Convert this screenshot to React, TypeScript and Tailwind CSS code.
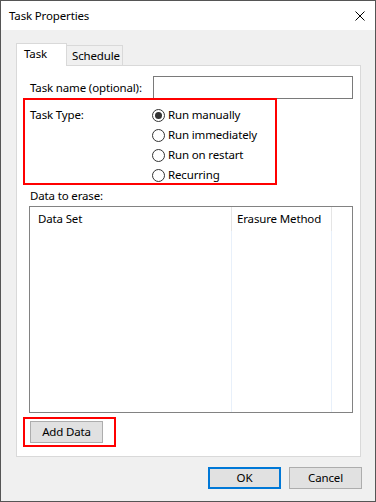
import React from "react";

const font = { fontFamily: '"Noto Sans", "Segoe UI", sans-serif' };

function Radio({ label, checked }: { label: string; checked?: boolean }) {
  return (
    <div className="flex h-[20px] items-center gap-[3px]">
      <span className="flex h-[13px] w-[13px] items-center justify-center rounded-full border border-[#333333] bg-white">
        {checked && <span className="h-[7px] w-[7px] rounded-full bg-[#333333]" />}
      </span>
      <span className="leading-[20px]">{label}</span>
    </div>
  );
}

export default function App() {
  return (
    <div
      className="relative flex h-[502px] w-[376px] flex-col border border-[#555555] bg-[#f0f0f0] text-[11.5px] tracking-[-0.15px] text-black"
      style={font}
    >
      {/* Title bar */}
      <div className="flex h-[29px] shrink-0 items-center justify-between bg-white pl-[8px] pr-[10px]">
        <span className="leading-[16px]">Task Properties</span>
        <svg width="10" height="10" viewBox="0 0 10 10" className="block">
          <path d="M0.5 0.5 L9.5 9.5 M9.5 0.5 L0.5 9.5" stroke="#000" strokeWidth="1" fill="none" />
        </svg>
      </div>

      {/* Body */}
      <div className="flex flex-1 flex-col pl-[15px] pt-[13px]">
        {/* Tabs */}
        <div className="flex h-[22px] items-end">
          <div className="relative z-10 mb-[-1px] flex h-[23px] w-[51px] items-start border-l border-r border-t border-[#d9d9d9] bg-white pl-[7px] pt-[2px]">
            <span className="leading-[16px]">Task</span>
          </div>
          <div className="flex h-[20px] w-[56px] items-start border-r border-t border-[#d9d9d9] bg-[#f0f0f0] pl-[5px] pt-[2px]">
            <span className="leading-[16px]">Schedule</span>
          </div>
        </div>

        {/* Panel */}
        <div className="flex h-[392px] w-[345px] flex-col border border-[#d9d9d9] bg-white">
          <div className="mt-[10px] flex items-center pl-[13px]">
            <span className="w-[123px] leading-[16px]">Task name (optional):</span>
            <div className="h-[23px] w-[200px] border border-[#7a7a7a] bg-white" />
          </div>

          <div className="mt-[6px] flex pl-[13px]">
            <span className="w-[122px] leading-[20px]">Task Type:</span>
            <div className="flex flex-col">
              <Radio label="Run manually" checked />
              <Radio label="Run immediately" />
              <Radio label="Run on restart" />
              <Radio label="Recurring" />
            </div>
          </div>

          <div className="mt-[1px] h-[20px] pl-[13px] leading-[20px]">Data to erase:</div>

          <div className="ml-[12px] flex h-[207px] w-[324px] border border-[#828282] bg-white">
            <div className="flex w-[202px] flex-col">
              <div className="h-[24px] border-r border-[#e5e5e5] pl-[8px] pt-[4px] leading-[16px]">Data Set</div>
              <div className="flex-1 border-r border-[#e8f0fa]" />
            </div>
            <div className="flex w-[100px] flex-col">
              <div className="h-[24px] border-r border-[#e5e5e5] pl-[5px] pt-[4px] leading-[16px]">Erasure Method</div>
              <div className="flex-1 border-r border-[#e8f0fa]" />
            </div>
            <div className="flex-1" />
          </div>

          <div className="ml-[13px] mt-[8px] flex h-[22px] w-[73px] items-center justify-center border border-[#adadad] bg-[#e1e1e1]">
            <span className="leading-[16px]">Add Data</span>
          </div>
        </div>

        {/* Footer */}
        <div className="mt-[10px] flex justify-end gap-[8px] pr-[13px]">
          <div className="flex h-[22px] w-[73px] items-center justify-center border-2 border-[#0078d7] bg-[#e1e1e1]">
            <span className="leading-[16px]">OK</span>
          </div>
          <div className="flex h-[22px] w-[73px] items-center justify-center border border-[#adadad] bg-[#e1e1e1]">
            <span className="leading-[16px]">Cancel</span>
          </div>
        </div>
      </div>

      {/* Red annotation boxes */}
      <div className="pointer-events-none absolute left-[22px] top-[97px] h-[87px] w-[254px] border-2 border-[#ff0000]" />
      <div className="pointer-events-none absolute left-[22px] top-[416px] h-[30px] w-[93px] border-2 border-[#ff0000]" />
    </div>
  );
}
